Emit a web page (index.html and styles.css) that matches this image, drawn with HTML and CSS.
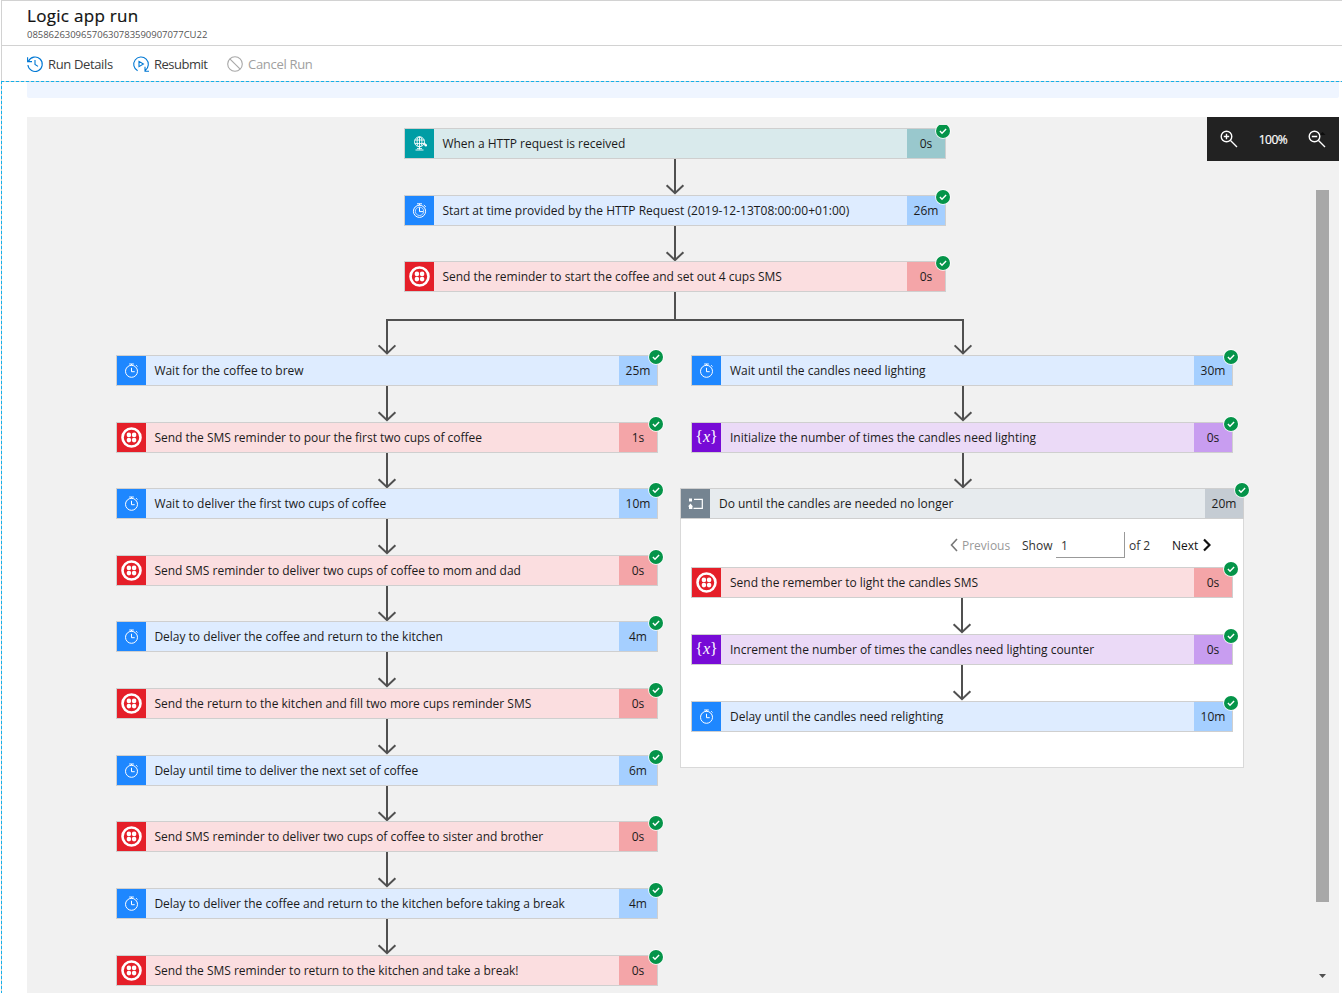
FILE: index.html
```html
<!DOCTYPE html>
<html lang="en">
<head>
<meta charset="utf-8">
<title>Logic app run</title>
<link rel="stylesheet" href="styles.css">
</head>
<body>
<svg class="defs" aria-hidden="true">
  <symbol id="i-ok" viewBox="0 0 16 16"><circle cx="8" cy="8" r="7.8" fill="#fff"/><circle cx="8" cy="8" r="7" fill="#059449"/><path d="M4.9 8.1l2.1 2.1 4.1-4.1" fill="none" stroke="#fff" stroke-width="1.4"/></symbol>
  <symbol id="i-arrow" viewBox="0 0 20 36"><path d="M10 0V34M1.6 26.2L10 34.2l8.4-8" fill="none" stroke="#505050" stroke-width="2"/></symbol>
  <symbol id="i-timer" viewBox="0 0 29 29"><g fill="none" stroke="#fff" stroke-width="1"><circle cx="14.5" cy="15.3" r="6"/><path d="M12.2 8h4.6M14.5 8v1.4M19.2 9.2l1.3 1.3M14.5 11.8v3.9h3.2"/></g></symbol>
  <symbol id="i-clock" viewBox="0 0 29 29"><g fill="none" stroke="#fff" stroke-width="1"><circle cx="14.5" cy="15.3" r="6.1"/><circle cx="14.5" cy="15.3" r="4.2" stroke-opacity=".7"/><path d="M12 7.8h5M14.5 7.8v1.5M18.8 9l2 1.8M14.5 11.3v4.3h3.8"/></g></symbol>
  <symbol id="i-sms" viewBox="0 0 29 29"><circle cx="14.5" cy="14.5" r="9" fill="none" stroke="#fff" stroke-width="2.6"/><g fill="#fff"><circle cx="11.9" cy="11.9" r="2.3"/><circle cx="17.1" cy="11.9" r="2.3"/><circle cx="11.9" cy="17.1" r="2.3"/><circle cx="17.1" cy="17.1" r="2.3"/></g></symbol>
  <symbol id="i-http" viewBox="0 0 29 29"><g fill="none" stroke="#fff" stroke-width=".9"><circle cx="14.5" cy="12.8" r="5"/><ellipse cx="14.5" cy="12.8" rx="2.4" ry="5"/><path d="M9.8 11h9.4M9.8 14.6h9M14.5 8v12.5M10.5 21h8M12 19.6h5M17.5 14.8h3.3M19.4 13.6v2.2l2 .8"/></g><circle cx="20.8" cy="16.3" r="1.2" fill="#fff"/></symbol>
  <symbol id="i-loop" viewBox="0 0 29 29"><path d="M13 10.4h8.3v9H12.5" fill="none" stroke="#fff" stroke-width="1.2"/><path d="M8 9.5h3v3H8zM7 17.5l2.5-3 2.5 3zM8 17.5h3.4v2.4H8z" fill="#fff"/></symbol>
</svg>
<div class="blade">
  <header class="head">
    <h1 class="title">Logic app run</h1>
    <p class="run-id">08586263096570630783590907077CU22</p>
  </header>
  <nav class="toolbar">
    <a class="cmd details"><svg class="cmd-icon" viewBox="0 0 16 16"><path d="M1.5 5.2A7.2 7.2 0 1 1 .9 9M.6 1.2v4.4H5M8 4v4.4l3 2"/></svg><span>Run Details</span></a>
    <a class="cmd resubmit"><svg class="cmd-icon" viewBox="0 0 16 16"><path d="M4.6 14.8A7.3 7.3 0 1 1 12.4 14.2M12 10.8v4.4h4M6 5.4v5.2L10.4 8z"/></svg><span>Resubmit</span></a>
    <a class="cmd cancel"><svg class="cmd-icon" viewBox="0 0 16 16"><circle cx="8" cy="8" r="7.3"/><path d="M2.8 2.8l10.4 10.4"/></svg><span>Cancel Run</span></a>
  </nav>
  <main class="body">
    <div class="banner"></div>
    <section class="canvas">
      <div class="flow">
        <div class="column trunk">
          <div class="card http first"><svg class="icon"><use href="#i-http"/></svg><span class="label">When a HTTP request is received</span><span class="time">0s</span><svg class="ok"><use href="#i-ok"/></svg></div>
          <svg class="arrow"><use href="#i-arrow"/></svg>
          <div class="card delay"><svg class="icon"><use href="#i-clock"/></svg><span class="label stamp">Start at time provided by the HTTP Request (2019-12-13T08:00:00+01:00)</span><span class="time">26m</span><svg class="ok"><use href="#i-ok"/></svg></div>
          <svg class="arrow"><use href="#i-arrow"/></svg>
          <div class="card sms"><svg class="icon"><use href="#i-sms"/></svg><span class="label">Send the reminder to start the coffee and set out 4 cups SMS</span><span class="time">0s</span><svg class="ok"><use href="#i-ok"/></svg></div>
        </div>
        <svg class="fork" viewBox="0 0 596 63"><path d="M298 0v28M10 61V28h576v33M1.6 53.4l8.4 8 8.4-8M577.6 53.4l8.4 8 8.4-8" fill="none" stroke="#505050" stroke-width="2"/></svg>
        <div class="branches">
          <div class="column">
            <div class="card delay"><svg class="icon"><use href="#i-timer"/></svg><span class="label">Wait for the coffee to brew</span><span class="time">25m</span><svg class="ok"><use href="#i-ok"/></svg></div>
            <svg class="arrow"><use href="#i-arrow"/></svg>
            <div class="card sms"><svg class="icon"><use href="#i-sms"/></svg><span class="label">Send the SMS reminder to pour the first two cups of coffee</span><span class="time">1s</span><svg class="ok"><use href="#i-ok"/></svg></div>
            <svg class="arrow"><use href="#i-arrow"/></svg>
            <div class="card delay"><svg class="icon"><use href="#i-timer"/></svg><span class="label">Wait to deliver the first two cups of coffee</span><span class="time">10m</span><svg class="ok"><use href="#i-ok"/></svg></div>
            <svg class="arrow"><use href="#i-arrow"/></svg>
            <div class="card sms"><svg class="icon"><use href="#i-sms"/></svg><span class="label">Send SMS reminder to deliver two cups of coffee to mom and dad</span><span class="time">0s</span><svg class="ok"><use href="#i-ok"/></svg></div>
            <svg class="arrow"><use href="#i-arrow"/></svg>
            <div class="card delay"><svg class="icon"><use href="#i-timer"/></svg><span class="label">Delay to deliver the coffee and return to the kitchen</span><span class="time">4m</span><svg class="ok"><use href="#i-ok"/></svg></div>
            <svg class="arrow"><use href="#i-arrow"/></svg>
            <div class="card sms"><svg class="icon"><use href="#i-sms"/></svg><span class="label">Send the return to the kitchen and fill two more cups reminder SMS</span><span class="time">0s</span><svg class="ok"><use href="#i-ok"/></svg></div>
            <svg class="arrow"><use href="#i-arrow"/></svg>
            <div class="card delay"><svg class="icon"><use href="#i-timer"/></svg><span class="label">Delay until time to deliver the next set of coffee</span><span class="time">6m</span><svg class="ok"><use href="#i-ok"/></svg></div>
            <svg class="arrow"><use href="#i-arrow"/></svg>
            <div class="card sms"><svg class="icon"><use href="#i-sms"/></svg><span class="label">Send SMS reminder to deliver two cups of coffee to sister and brother</span><span class="time">0s</span><svg class="ok"><use href="#i-ok"/></svg></div>
            <svg class="arrow"><use href="#i-arrow"/></svg>
            <div class="card delay"><svg class="icon"><use href="#i-timer"/></svg><span class="label">Delay to deliver the coffee and return to the kitchen before taking a break</span><span class="time">4m</span><svg class="ok"><use href="#i-ok"/></svg></div>
            <svg class="arrow"><use href="#i-arrow"/></svg>
            <div class="card sms"><svg class="icon"><use href="#i-sms"/></svg><span class="label">Send the SMS reminder to return to the kitchen and take a break!</span><span class="time">0s</span><svg class="ok"><use href="#i-ok"/></svg></div>
          </div>
          <div class="column right">
            <div class="card delay"><svg class="icon"><use href="#i-timer"/></svg><span class="label">Wait until the candles need lighting</span><span class="time">30m</span><svg class="ok"><use href="#i-ok"/></svg></div>
            <svg class="arrow"><use href="#i-arrow"/></svg>
            <div class="card var"><span class="icon braces">{<i>x</i>}</span><span class="label">Initialize the number of times the candles need lighting</span><span class="time">0s</span><svg class="ok"><use href="#i-ok"/></svg></div>
            <svg class="arrow"><use href="#i-arrow"/></svg>
            <div class="scope">
              <div class="card loop"><svg class="icon"><use href="#i-loop"/></svg><span class="label">Do until the candles are needed no longer</span><span class="time">20m</span><svg class="ok"><use href="#i-ok"/></svg></div>
              <div class="pager">
                <svg class="chev off" viewBox="0 0 8 14"><path d="M7 1L1.5 7 7 13"/></svg><span class="prev">Previous</span>
                <span class="show">Show</span><span class="page">1</span><span class="of">of 2</span><span class="next">Next</span><svg class="chev on" viewBox="0 0 8 14"><path d="M1 1.5L6.5 7 1 12.5"/></svg>
              </div>
              <div class="column inner">
                <div class="card sms"><svg class="icon"><use href="#i-sms"/></svg><span class="label">Send the remember to light the candles SMS</span><span class="time">0s</span><svg class="ok"><use href="#i-ok"/></svg></div>
                <svg class="arrow"><use href="#i-arrow"/></svg>
                <div class="card var"><span class="icon braces">{<i>x</i>}</span><span class="label">Increment the number of times the candles need lighting counter</span><span class="time">0s</span><svg class="ok"><use href="#i-ok"/></svg></div>
                <svg class="arrow"><use href="#i-arrow"/></svg>
                <div class="card delay"><svg class="icon"><use href="#i-timer"/></svg><span class="label">Delay until the candles need relighting</span><span class="time">10m</span><svg class="ok"><use href="#i-ok"/></svg></div>
              </div>
            </div>
          </div>
        </div>
      </div>
      <aside class="rail">
        <div class="zoom">
          <svg class="lens" viewBox="0 0 18 18"><circle cx="6.5" cy="6.5" r="5.3"/><path d="M10.5 10.5l6.5 6.5M3.8 6.5h5.4M6.5 3.8v5.4"/></svg>
          <span class="percent">100%</span>
          <svg class="lens" viewBox="0 0 18 18"><path class="up" d="M11.5 5L14.5 2l3 3z"/><circle cx="6.5" cy="6.5" r="5.3"/><path d="M10.5 10.5l6.5 6.5M3.8 6.5h5.4"/></svg>
        </div>
        <div class="thumb"></div>
        <svg class="down" viewBox="0 0 7 4"><path d="M0 0h7L3.5 4z" fill="#505050"/></svg>
      </aside>
    </section>
  </main>
</div>
</body>
</html>
```
FILE: styles.css
```css
* { box-sizing: border-box; }
body { margin: 0; width: 1342px; height: 993px; overflow: hidden; background: #fff; font-family: "Open Sans", "Noto Sans", sans-serif; color: #1b1b1b; }
.defs { position: absolute; width: 0; height: 0; }
.blade { display: flex; flex-direction: column; height: 993px; margin-left: 1px; border-top: 1px solid #d2d2d2; border-left: 1px solid #d2d2d2; }
.head { height: 45px; padding: 4px 0 0 25px; border-bottom: 1px solid #d2d2d2; }
.title { margin: 0 0 1px; font-size: 17px; font-weight: 500; line-height: 22px; letter-spacing: .3px; color: #111; -webkit-text-stroke: .2px #111; }
.run-id { margin: 0; font-size: 9.5px; line-height: 13px; letter-spacing: -.03px; color: #555; }
.toolbar { display: flex; height: 35px; padding: 1px 0 0 25px; }
.cmd { display: flex; align-items: center; gap: 5px; font-size: 13px; letter-spacing: -.36px; color: #3b3b3b; }
.details { width: 106px; }
.resubmit { width: 94px; letter-spacing: -.5px; }
.cmd-icon { width: 16px; height: 16px; fill: none; stroke: #0078d4; stroke-width: 1.1; overflow: visible; }
.cancel { letter-spacing: -.3px; color: #a0a0a0; }
.cancel .cmd-icon { stroke: #a8a8a8; }
/* focus outline: blue dashes running over the grey border */
.body {
  flex: 1; margin-left: -1px; padding: 1px 0 0 26px;
  background:
    repeating-linear-gradient(90deg, #14b0ea 0 3px, #c9d0d3 3px 5px) top / 100% 1px no-repeat,
    repeating-linear-gradient(180deg, #14b0ea 0 3px, #c9d0d3 3px 5px) left / 1px 100% no-repeat;
}
.banner { width: 1312px; height: 16px; background: #eff5ff; border-radius: 0 0 2px 2px; }
.canvas { display: flex; width: 1312px; height: 876px; margin-top: 19px; background: #f1f1f1; overflow: hidden; }
.flow { flex: 0 0 1180px; min-width: 0; padding-top: 11px; }
.column { display: flex; flex-direction: column; flex: none; width: 542px; }
.trunk { margin-left: 377px; }
.card { position: relative; display: flex; flex: none; width: 542px; height: 31px; border: 1px solid #cfcfcf; font-size: 12px; line-height: 29px; }
.icon { flex: none; width: 29px; height: 29px; }
.label { flex: 1; padding-left: 8.4px; white-space: nowrap; letter-spacing: -.01px; }
.stamp { letter-spacing: .02px; }
.right .label { padding-left: 9px; }
.time { width: 38px; text-align: center; }
.ok { position: absolute; right: -7px; top: -7px; width: 16px; height: 16px; }
.trunk .ok { right: -6px; }
.first .ok { top: -6px; clip-path: inset(2px 0 0 0); }
.arrow { display: block; flex: none; width: 20px; height: 36px; margin: 0 0 -.4px 261px; }
.right > .arrow { margin-left: 262px; }
.http { background: #d9eaec; } .http .icon { background: #009da5; } .http .time { background: #99c8cd; }
.delay { background: #deecff; } .delay .icon { background: #1e87ff; } .delay .time { background: #a5cfff; }
.sms { background: #fbdee0; } .sms .icon { background: #e51f29; } .sms .time { background: #f4a5a8; }
.var { background: #ebdaf7; } .var .icon { background: #770bd6; } .var .time { background: #c89df0; }
.loop { background: #e7ebee; } .loop .icon { background: #758491; } .loop .time { background: #c5ccd3; }
.braces { color: #fff; font: 16px/27px "Liberation Serif", serif; text-align: center; }
.fork { display: block; width: 596px; height: 63px; margin: 0 0 -.2px 350px; }
.branches { display: flex; gap: 33px; padding-left: 89px; }
.scope { width: 564px; height: 280px; margin-left: -11px; border: 1px solid #d9d9d9; background: #fff; }
.scope > .card { width: 564px; margin: -1px; }
.pager { display: flex; align-items: center; height: 49.1px; padding: 5px 0 0 269px; font-size: 12px; color: #333; }
.chev { flex: none; width: 8px; height: 14px; fill: none; }
.off { stroke: #777; stroke-width: 1.6; } .on { stroke: #111; stroke-width: 2.2; margin-left: 5px; }
.prev { width: 60px; padding-left: 4px; color: #999; }
.show { width: 34px; margin-left: 4px; }
.page { width: 69px; height: 26px; padding-left: 5px; line-height: 27px; border-right: 1px solid #999; border-bottom: 1px solid #999; }
.of { width: 47px; padding-left: 4px; }
.next { color: #111; }
.inner { margin-left: 10px; }
.rail { display: flex; flex-direction: column; align-items: flex-end; flex: none; width: 132px; }
.zoom { display: flex; align-items: center; justify-content: space-between; width: 132px; height: 44px; padding: 0 13px; background: #222; color: #fff; font-size: 12px; }
.percent { letter-spacing: -.5px; -webkit-text-stroke: .2px #fff; }
.lens { width: 18px; height: 18px; fill: none; stroke: #fff; stroke-width: 1.4; }
.up { fill: #0c0c0c; stroke: none; }
.thumb { width: 13px; height: 712px; margin: 29px 10px 0 0; background: #a8a8a8; }
.down { width: 7px; height: 4px; margin: 72px 13px 0 0; }
```
